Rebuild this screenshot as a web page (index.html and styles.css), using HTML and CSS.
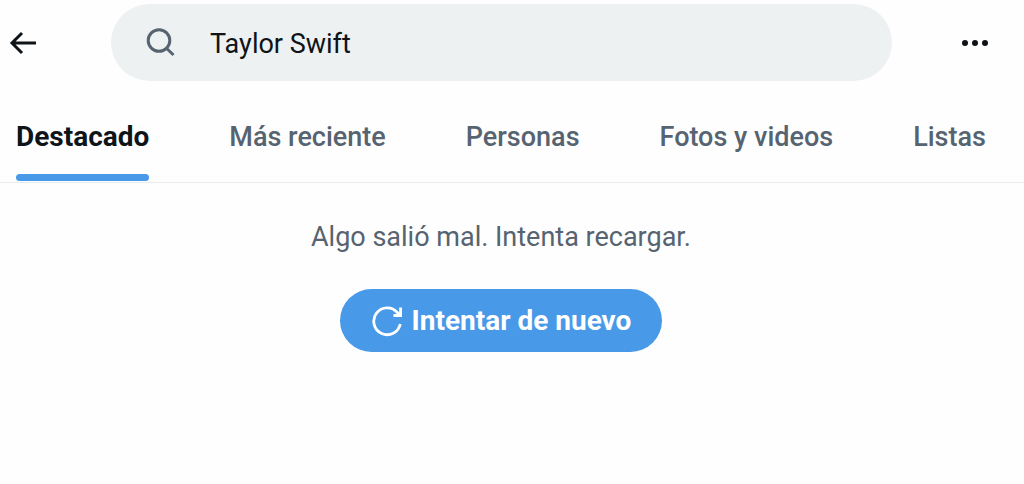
FILE: index.html
```html
<!DOCTYPE html>
<html lang="es">
<head>
<meta charset="UTF-8" />
<meta name="viewport" content="width=device-width, initial-scale=1" />
<title>Taylor Swift - Buscar</title>
<link rel="stylesheet" href="styles.css">
</head>
<body>
<header class="topbar">
  <button type="button" class="icon-btn" aria-label="Atrás">
    <svg width="28" height="24" viewBox="0 0 28 24" fill="none" stroke="currentColor" stroke-width="3">
      <path d="M28 12H5M14 2L4 12l10 10" />
    </svg>
  </button>
  <form class="search" role="search">
    <label for="query" class="search-icon" aria-label="Buscar">
      <svg width="30" height="30" viewBox="0 0 30 30" fill="none" stroke="currentColor" stroke-width="3">
        <circle cx="13" cy="12.5" r="10.8" />
        <path d="M20.2 20L27.5 27" />
      </svg>
    </label>
    <input type="text" id="query" name="query" value="Taylor Swift" autocomplete="off" />
  </form>
  <button type="button" class="icon-btn" aria-label="Más opciones">
    <svg width="28" height="8" viewBox="0 0 28 8" fill="currentColor">
      <circle cx="4" cy="4" r="3" />
      <circle cx="14" cy="4" r="3" />
      <circle cx="24" cy="4" r="3" />
    </svg>
  </button>
</header>

<nav class="tabs">
  <a href="#destacado" class="tab active" aria-current="page">Destacado</a>
  <a href="#reciente" class="tab">Más reciente</a>
  <a href="#personas" class="tab">Personas</a>
  <a href="#fotos" class="tab">Fotos y videos</a>
  <a href="#listas" class="tab">Listas</a>
</nav>

<main class="error-state">
  <p class="message">Algo salió mal. Intenta recargar.</p>
  <button type="button" class="retry">
    <svg width="32" height="32" viewBox="0 0 32 32" fill="none" stroke="currentColor" stroke-width="2.8">
      <path d="M29.3 19A13.4 13.4 0 1 1 26.4 7.6L29 10" />
      <path d="M29.6 2.5v8H22.5" />
    </svg>
    <span>Intentar de nuevo</span>
  </button>
</main>
</body>
</html>
```
FILE: styles.css
```css
* {
  box-sizing: border-box;
}
body {
  margin: 0;
  background: #fefefe;
  color: #0f1419;
  font-family: Roboto, "Liberation Sans", sans-serif;
  font-size: 27px;
  line-height: 32px;
}
button {
  border: none;
  font: inherit;
  cursor: pointer;
}

/* Top bar */
.topbar {
  display: flex;
  align-items: center;
  justify-content: space-between;
  padding: 4px 35px 0 8px;
}
.icon-btn {
  display: flex;
  padding: 0;
  background: none;
  color: #0f1419;
}
.search {
  display: flex;
  align-items: center;
  flex: 1;
  height: 77px;
  margin: 0 69px 0 75px;
  padding: 0 35px;
  border-radius: 39px;
  background: #eef1f2;
}
.search-icon {
  display: flex;
  color: #566370;
}
.search input {
  flex: 1;
  min-width: 0;
  margin-left: 34px;
  padding: 2px 0 0;
  border: none;
  outline: none;
  background: none;
  color: #0f1419;
  font: inherit;
}

/* Tabs */
.tabs {
  display: flex;
  justify-content: space-between;
  padding: 0 38px 1px 16px;
  border-bottom: 1px solid #e8eced;
}
.tab {
  padding: 40px 0 21px;
  border-bottom: 7px solid transparent;
  color: #566370;
  font-weight: 500;
  text-decoration: none;
  white-space: nowrap;
}
.tab.active {
  position: relative;
  color: #0f1419;
  font-size: 28px;
  font-weight: 700;
}
.tab.active::after {
  content: "";
  position: absolute;
  left: 0;
  right: 0;
  bottom: -7px;
  height: 7px;
  border-radius: 4px;
  background: #4999e9;
}

/* Error message */
.error-state {
  display: flex;
  flex-direction: column;
  align-items: center;
  padding: 38px 22px 38px 0;
}
.message {
  margin: 0 0 36px;
  color: #566370;
}
.retry {
  display: flex;
  align-items: center;
  gap: 9px;
  height: 63px;
  padding: 0 31px;
  border-radius: 32px;
  background: #4999e9;
  color: #fff;
  font-size: 28px;
  font-weight: 700;
}
```
